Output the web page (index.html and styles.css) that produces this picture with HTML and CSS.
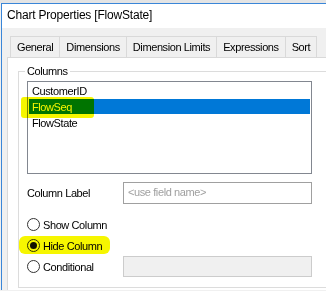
FILE: index.html
```html
<!DOCTYPE html>
<html lang="en">
<head>
    <meta charset="UTF-8">
    <title>Chart Properties [FlowState]</title>
    <link rel="stylesheet" href="styles.css">
</head>
<body>
    <div class="top-strip"></div>
    <div class="window">
        <div class="titlebar">Chart Properties [FlowState]</div>
        <div class="client">
            <div class="tabs">
                <div class="tab">General</div>
                <div class="tab">Dimensions</div>
                <div class="tab">Dimension Limits</div>
                <div class="tab">Expressions</div>
                <div class="tab">Sort</div>
            </div>
            <div class="panel">
                <fieldset class="group">
                    <legend>Columns</legend>
                    <div class="listbox">
                        <div class="item">CustomerID</div>
                        <div class="item selected">FlowSeq<span class="marker marker-list"></span></div>
                        <div class="item">FlowState</div>
                    </div>
                    <div class="field-row">
                        <span class="label">Column Label</span>
                        <div class="textbox">&lt;use field name&gt;</div>
                    </div>
                    <div class="radios">
                        <div class="radio-row">
                            <span class="radio"></span>
                            <span>Show Column</span>
                        </div>
                        <div class="radio-row">
                            <span class="radio checked"></span>
                            <span>Hide Column</span>
                            <span class="marker marker-radio"></span>
                        </div>
                        <div class="radio-row">
                            <span class="radio"></span>
                            <span class="label-cond">Conditional</span>
                            <div class="textbox disabled"></div>
                        </div>
                    </div>
                </fieldset>
            </div>
        </div>
    </div>
</body>
</html>
```

FILE: styles.css
```css
html, body {
    margin: 0;
    padding: 0;
}
body {
    width: 326px;
    height: 291px;
    overflow: hidden;
    background-color: #f0f0f0;
    font-family: "Liberation Sans", Arial, sans-serif;
    font-size: 11px;
    letter-spacing: -0.4px;
    color: #000;
}
.top-strip {
    height: 3px;
    background-color: #e4e4e4;
}
.window {
    width: 324px;
    margin-left: 1px;
    border-top: 1px solid #3a86d8;
    border-left: 1px solid #3a86d8;
}
.titlebar {
    height: 24px;
    line-height: 22px;
    padding-left: 5px;
    background-color: white;
    font-size: 12px;
    letter-spacing: -0.2px;
}
.client {
    background-color: #f0f0f0;
    padding: 8px 0 0 5px;
}
.tabs {
    display: flex;
    margin-left: 3px;
    height: 21px;
}
.tab {
    flex-shrink: 0;
    white-space: nowrap;
    padding: 0 6px;
    line-height: 20px;
    border: 1px solid #d9d9d9;
    border-bottom: none;
    border-right: none;
    background-color: #f0f0f0;
}
.tab:last-child {
    border-right: 1px solid #d9d9d9;
}
.panel {
    background-color: white;
    border: 1px solid #d9d9d9;
    border-right: none;
    border-bottom: none;
    padding: 0 0 2px 10px;
}
.group {
    margin: 6px 0 0 0;
    padding: 3px 0 10px 8px;
    border: 1px solid #dcdcdc;
    border-right: none;
    min-width: 0;
}
.group legend {
    padding: 0 2px;
    margin-left: -2px;
    line-height: 14px;
}
.listbox {
    width: 283px;
    height: 90px;
    border: 1px solid #828790;
    padding-top: 1px;
}
.item {
    position: relative;
    height: 16px;
    line-height: 16px;
    padding-left: 3px;
    margin: 0 1px;
}
.item.selected {
    background-color: #0078d7;
    color: white;
    height: 15px;
    margin-bottom: 1px;
}
.marker {
    position: absolute;
    background-color: #f6f600;
    mix-blend-mode: multiply;
    border-radius: 3px;
}
.marker-list {
    left: -8px;
    top: -2px;
    width: 73px;
    height: 21px;
}
.field-row {
    display: flex;
    align-items: center;
    margin-top: 8px;
}
.field-row .label {
    width: 96px;
}
.textbox {
    width: 183px;
    height: 20px;
    line-height: 18px;
    padding-left: 4px;
    border: 1px solid #a0a0a0;
    color: #a0a0a0;
    background-color: white;
}
.textbox.disabled {
    height: 19px;
    border-color: #cccccc;
    background-color: #f0f0f0;
}
.radios {
    margin-top: 10px;
}
.radio-row {
    position: relative;
    display: flex;
    align-items: center;
    height: 21px;
    gap: 3px;
}
.radio {
    box-sizing: border-box;
    width: 13px;
    height: 13px;
    border: 1px solid #333;
    border-radius: 50%;
    background-color: white;
    display: flex;
    align-items: center;
    justify-content: center;
}
.radio.checked::after {
    content: "";
    width: 7px;
    height: 7px;
    border-radius: 50%;
    background-color: #111;
}
.label-cond {
    width: 77px;
}
.marker-radio {
    left: -8px;
    top: 1px;
    width: 91px;
    height: 18px;
    border-radius: 6px;
}
```
